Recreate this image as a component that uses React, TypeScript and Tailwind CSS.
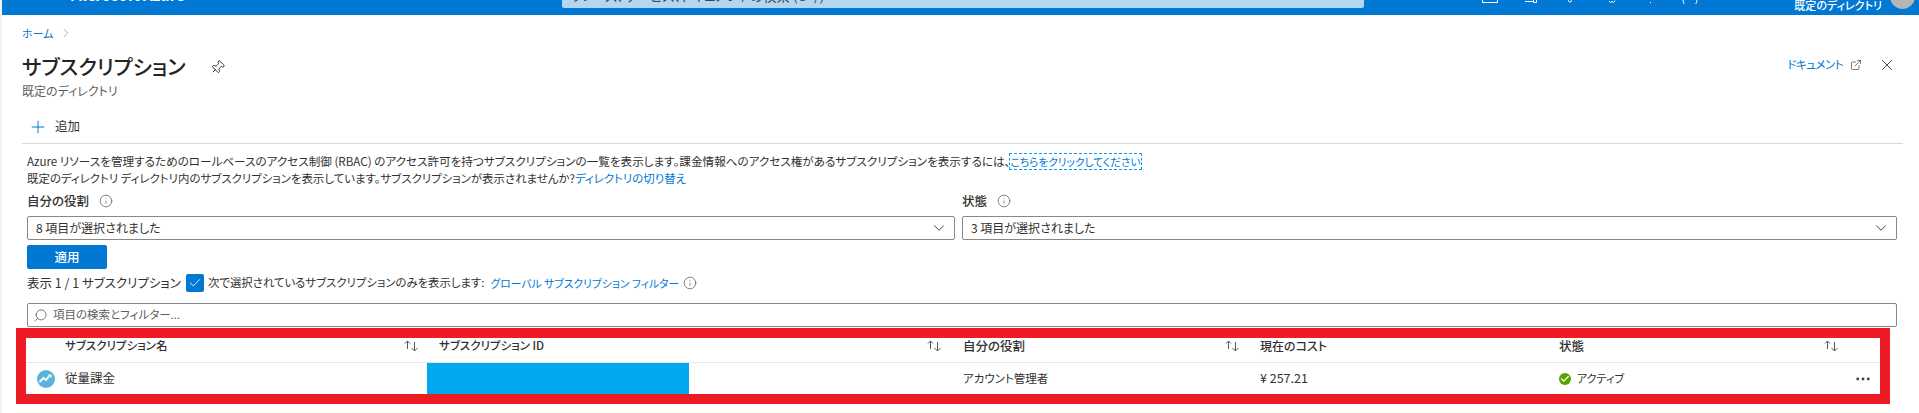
import { Check, ChevronDown, ChevronRight, ExternalLink, Info, MoreHorizontal, Pin, Plus, Search, X } from 'lucide-react';

const columns = [
  { label: 'サブスクリプション名', cls: 'w-[401px] pl-[39px] pr-[7px] text-[11.5px]', sort: true },
  { label: 'サブスクリプション ID', cls: 'w-[536px] pl-[12px] pr-[20px] text-[11.5px]', sort: true },
  { label: '自分の役割', cls: 'w-[297px] pr-[19px]', sort: true },
  { label: '現在のコスト', cls: 'w-[299px] text-[12px]', sort: false },
  { label: '状態', cls: 'w-[321px] pr-[40px]', sort: true },
];

function SortArrows() {
  return (
    <svg width="17" height="12" viewBox="0 0 17 12" fill="none" stroke="#555" strokeWidth="1">
      <path d="M4.5 9V1M2 3.5l2.5-2.5L7 3.5" />
      <path d="M11.5 2v9M8.5 8l3 3 3-3" />
    </svg>
  );
}

function InfoIcon() {
  return <Info className="h-3.5 w-3.5 text-[#555]" strokeWidth={1.2} />;
}

function SelectBox({ text, width }: { text: string; width: string }) {
  return (
    <div className={`${width} h-[24px] border border-[#8a8886] rounded-[2px] flex items-center justify-between pl-[8px] pr-[6px] text-[12px] text-[#323130]`}>
      <span>{text}</span>
      <ChevronDown className="h-[18px] w-[18px] text-[#323130]" strokeWidth={1.2} />
    </div>
  );
}

export default function App() {
  return (
    <div className='font-["Noto_Sans_CJK_JP","Noto_Sans",sans-serif] [font-feature-settings:"palt"] text-[12.5px] w-[1919px] h-[413px] overflow-hidden bg-white flex flex-col border-l-2 border-[#f2f2f2] text-[#323130]'>
      <header className="h-[15px] shrink-0 bg-[#0078d4] flex items-start text-white overflow-hidden">
        <div className="w-[560px] pl-[68px] text-[15px] font-semibold leading-[14px] -mt-[12px]">Microsoft Azure</div>
        <div className="w-[802px] h-[8px] bg-[#b3d7f2] rounded-b-[2px] overflow-hidden pl-[8px] text-[13.5px] leading-[12px] text-[#444]">
          <div className="-mt-[11px]">リソース、サービス、ドキュメントの検索 (G+/)</div>
        </div>
        <svg className="ml-[118px] shrink-0" width="218" height="4" viewBox="0 0 218 4" fill="none" stroke="#fff" strokeWidth="1">
          <path d="M.5 0v2.5h15V0" />
          <path d="M43 1.5h8M51.5 0v2.5h3V0" />
          <circle cx="88" cy="0.5" r="1.5" />
          <path d="M127 1l1.5 1.5L130 1.5l1.5 1 1.5-2" />
          <path d="M168 2.5h1" />
          <path d="M201 0a7 7 0 0 0 14 0" />
        </svg>
        <div className="flex-1 flex justify-end items-start pr-[4px] text-[11px] leading-[10px] font-medium">
          <span className="mr-[8px]">既定のディレクトリ</span>
          <div className="h-[25px] w-[25px] rounded-full bg-[#b5b5b5] -mt-[16px]" />
        </div>
      </header>

      <main className="flex-1 pl-[20px] min-w-0">
        <div className="flex items-center gap-[6px] h-[30px] pt-[6px] text-[11px] text-[#0078d4]">
          ホーム <ChevronRight className="h-3.5 w-3.5 text-[#777]" strokeWidth={1} />
        </div>

        <div className="flex items-start justify-between mt-[5px] pr-[23px]">
          <div>
            <div className="flex items-center h-[34px]">
              <h1 className="text-[20.7px] font-medium text-[#252423]">サブスクリプション</h1>
              <Pin className="ml-[24px] h-[15px] w-[15px] rotate-45 text-[#111]" strokeWidth={1.3} />
            </div>
            <p className="text-[12px] leading-[14px] text-[#605e5c]">既定のディレクトリ</p>
          </div>
          <div className="flex items-center h-[30px] text-[11.5px] tracking-[-0.5px] text-[#0078d4]">
            <span>ドキュメント</span>
            <ExternalLink className="ml-[7px] h-3 w-3 text-[#333]" strokeWidth={1.3} />
            <X className="ml-[16px] h-[18px] w-[18px] text-[#222]" strokeWidth={1.1} />
          </div>
        </div>

        <div className="flex items-center h-[34px] mt-[12px] mr-[16px] pl-[6px] border-b border-[#d9d9d9]">
          <Plus className="h-[20px] w-[20px] text-[#0078d4]" strokeWidth={1.2} />
          <span className="ml-[7px]">追加</span>
        </div>

        <div className="pl-[5px]">
          <div className="mt-[9px] text-[11.6px] leading-[17px]">
            <p>
              Azure リソースを管理するためのロールベースのアクセス制御 (RBAC) のアクセス許可を持つサブスクリプションの一覧を表示します。課金情報へのアクセス権があるサブスクリプションを表示するには、
              <a className="text-[10.7px] text-[#0078d4] outline-1 outline-dashed outline-[#00a2ed]">こちらをクリックしてください</a>
            </p>
            <p className="text-[11.45px]">
              既定のディレクトリ ディレクトリ内のサブスクリプションを表示しています。サブスクリプションが表示されませんか?
              <a className="text-[#0078d4]">ディレクトリの切り替え</a>
            </p>
          </div>

          <div className="flex gap-[7px] mt-[4px]">
            <div>
              <div className="flex items-center gap-[10px] h-[20px] font-medium">
                自分の役割 <InfoIcon />
              </div>
              <div className="mt-[5px]">
                <SelectBox text="8 項目が選択されました" width="w-[928px]" />
              </div>
            </div>
            <div>
              <div className="flex items-center gap-[10px] h-[20px] font-medium">
                状態 <InfoIcon />
              </div>
              <div className="mt-[5px]">
                <SelectBox text="3 項目が選択されました" width="w-[935px]" />
              </div>
            </div>
          </div>

          <button className="block mt-[5px] w-[80px] h-[24px] bg-[#0078d4] rounded-[2px] text-white font-medium">適用</button>

          <div className="flex items-center h-[18px] mt-[5px] text-[11.4px]">
            <span className="w-[159px] text-[12.5px] whitespace-nowrap">表示 1 / 1 サブスクリプション</span>
            <span className="h-[18px] w-[18px] rounded-[2px] bg-[#0078d4] flex items-center justify-center">
              <Check className="h-[14px] w-[14px] text-white" strokeWidth={1.5} />
            </span>
            <span className="ml-[4px]">次で選択されているサブスクリプションのみを表示します:</span>
            <a className="ml-[6px] text-[10.8px] text-[#0078d4]">グローバル サブスクリプション フィルター</a>
            <span className="ml-[4px]"><InfoIcon /></span>
          </div>

          <div className="mt-[11px] w-[1870px] h-[24px] border border-[#8a8886] rounded-[2px] flex items-center pl-[5px] text-[11.5px] text-[#605e5c]">
            <Search className="h-[15px] w-[15px] -scale-x-100 text-[#555]" strokeWidth={1.2} />
            <span className="ml-[5px]">項目の検索とフィルター...</span>
          </div>

          <div className="-ml-[11px] mt-[1px] w-[1874px] border-[10px] border-[#ed1c24] bg-white">
            <div className="flex h-[25px] border-b border-[#e6e6e6] font-medium">
              {columns.map((c) => (
                <div key={c.label} className={`${c.cls} flex items-center justify-between pb-[8px]`}>
                  <span>{c.label}</span>
                  {c.sort && <SortArrows />}
                </div>
              ))}
            </div>
            <div className="flex h-[31px] items-center">
              <div className="w-[401px] flex items-center pl-[11px]">
                <svg width="18" height="18" viewBox="0 0 18 18">
                  <circle cx="9" cy="9" r="9" fill="#59b4d9" />
                  <path d="M2.5 12l4-4 2.5 2 4-5" fill="none" stroke="#fff" strokeWidth="1.8" />
                  <path d="M11 4.5h3.5V8z" fill="#fff" />
                </svg>
                <span className="ml-[10px]">従量課金</span>
              </div>
              <div className="w-[536px] h-full">
                <div className="w-[262px] h-full bg-[#00a8f0]" />
              </div>
              <div className="w-[297px] text-[11.5px]">アカウント管理者</div>
              <div className="w-[299px] text-[12.5px]">¥ 257.21</div>
              <div className="flex-1 flex items-center justify-between pr-[8px]">
                <div className="flex items-center">
                  <span className="h-3 w-3 rounded-full bg-[#57a300] flex items-center justify-center">
                    <Check className="h-2.5 w-2.5 text-white" strokeWidth={3} />
                  </span>
                  <span className="ml-[6px] text-[11px]">アクティブ</span>
                </div>
                <MoreHorizontal className="h-[18px] w-[18px] text-[#444]" strokeWidth={1.8} />
              </div>
            </div>
          </div>
        </div>
      </main>
    </div>
  );
}
